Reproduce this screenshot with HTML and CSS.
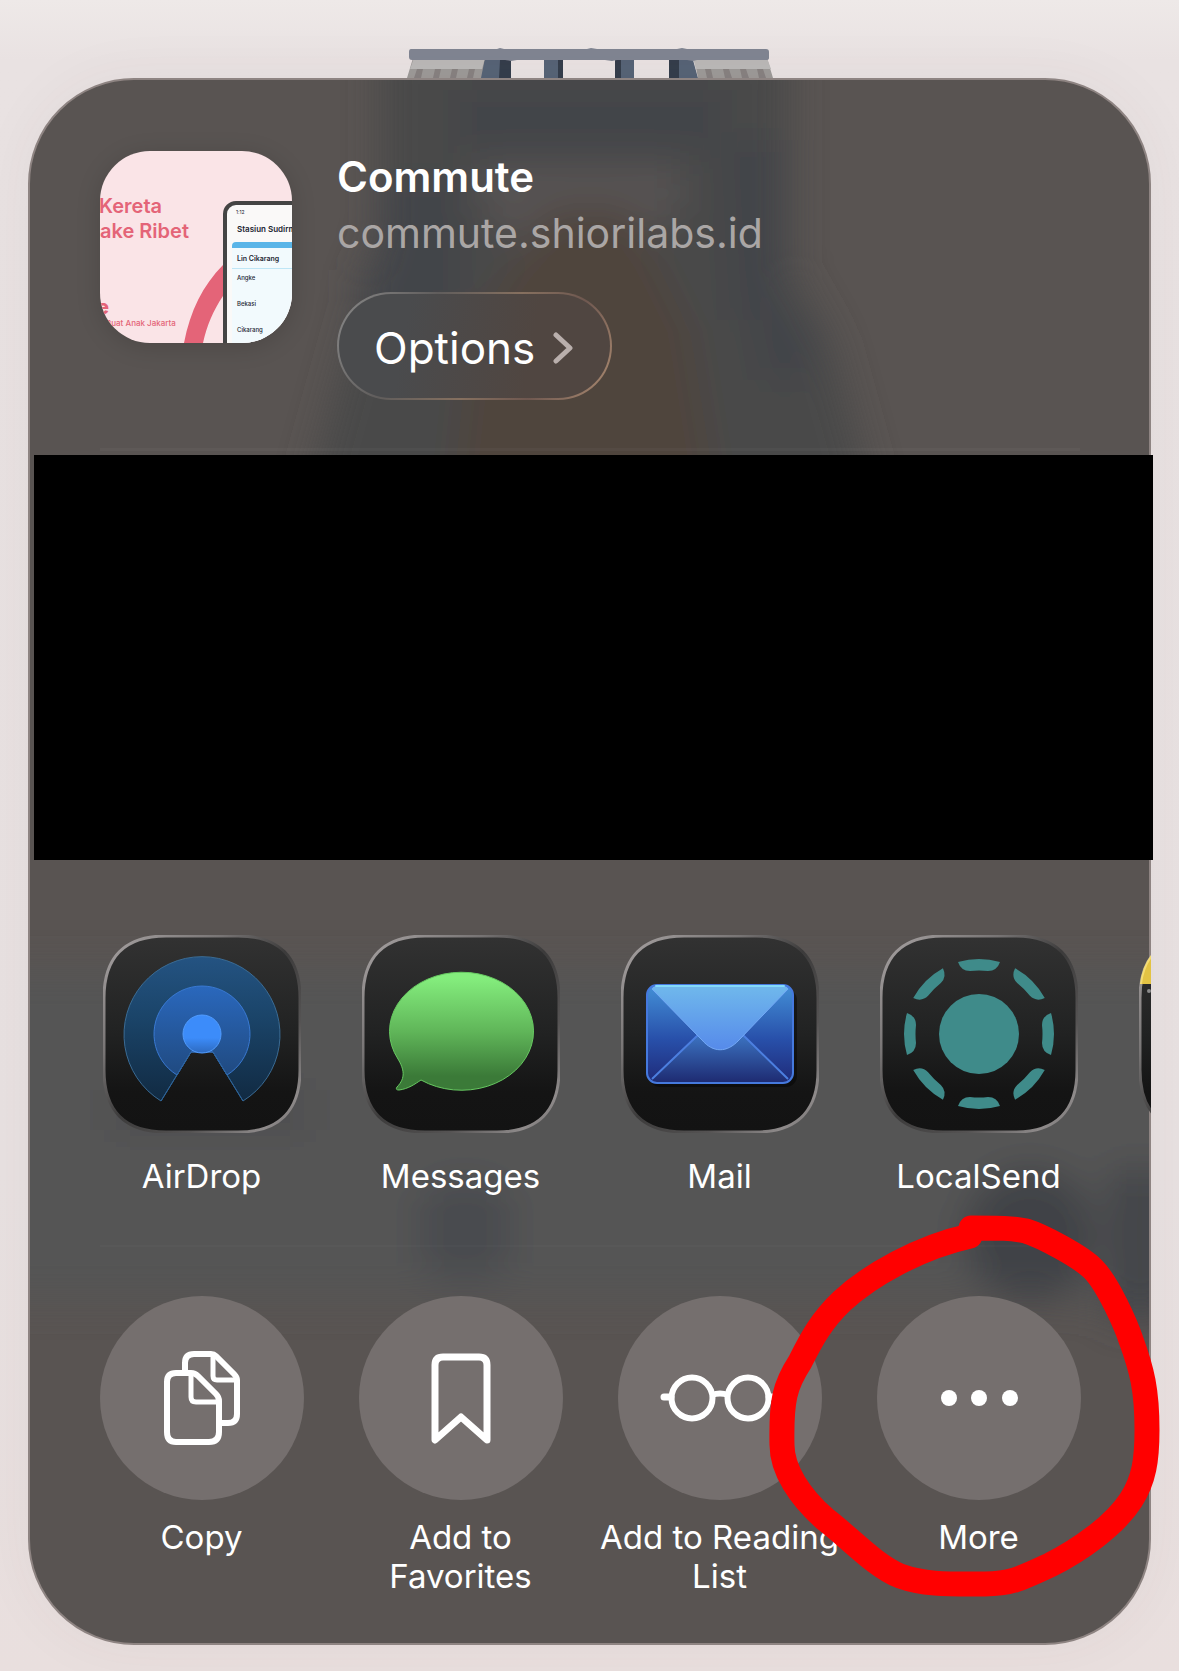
FILE: index.html
```html
<!DOCTYPE html>
<html lang="en">
<head>
<meta charset="utf-8">
<meta name="viewport" content="width=device-width, initial-scale=1">
<title>Share Commute</title>
<link rel="stylesheet" href="styles.css">
</head>
<body>
<div class="monument" aria-hidden="true">
  <svg viewBox="0 0 366 30" width="366" height="30">
    <path d="M76 12h28v18H72z M137 12h18v18h-18z M208 12h19v18h-19z M262 12h24l5 18h-29z" fill="#566376"/>
    <path d="M93 12h11v18H92z M151 12h5v18h-5z M208 12h6v18h-6z M262 12h10v18h-10z" fill="#343d4b"/>
    <path d="M6 10h72l-4 20H0z M287 10h73l6 20h-75z" fill="#9d9997"/>
    <path d="M7 10h71l-3 11H3z M286 10h74l4 11h-75z" fill="#bab8b7"/>
    <path d="M10 21h6l-2 9H7z M28 21h6l-2 9h-6z M45 21h6l-2 9h-6z M62 21h6l-2 9h-6z M298 21h6l2 9h-6z M316 21h6l3 9h-7z M333 21h6l3 9h-7z M350 21h6l3 9h-7z" fill="#878180"/>
    <path d="M4 1H90L93 0L97 1H180L184 0L190 1H270L275 0L280 1H359Q362 1 362 4V10Q362 12 359 12H290L286 13L280 12H210L205 13L198 12H110L104 13L98 12H5Q2 12 2 9V4Q2 1 4 1Z" fill="#808592"/>
  </svg>
</div>
<main class="sheet">
  <div class="glass" aria-hidden="true">
    <svg viewBox="0 0 1119 1563" preserveAspectRatio="none">
      <g filter="url(#soft)">
        <path d="M350 -40H760V190L800 260L850 440H270L320 260L350 150Z" fill="#4a4948"/>
        <path d="M430 10H690V70H430Z M350 100H430V210H350Z M690 60H750V240H700Z M330 190H420V270H330Z M720 240H780V300H730Z" fill="#434549"/>
        <path d="M450 85H650V130L600 170H500L450 130Z" fill="#575352"/>
        <path d="M520 130H600L660 250L690 440H420L440 250Z" fill="#4f443e"/>
        <rect x="-60" y="890" width="1240" height="330" fill="#555555"/>
        <rect x="80" y="1010" width="200" height="40" fill="#4d4e4f"/>
        <rect x="390" y="1100" width="90" height="100" rx="30" fill="#4a4c4f"/>
        <circle cx="1000" cy="1155" r="66" fill="#414347"/>
        <rect x="1080" y="1090" width="60" height="150" fill="#434549"/>
      </g>
      <rect x="70" y="368" width="980" height="3" fill="#ffffff" opacity=".03"/>
      <rect x="70" y="1165" width="980" height="2" fill="#ffffff" opacity=".02"/>
      <defs><filter id="soft" x="-10%" y="-10%" width="120%" height="120%"><feGaussianBlur stdDeviation="18"/></filter></defs>
    </svg>
  </div>

  <header class="preview">
    <svg class="thumb" viewBox="0 0 192 192" role="img" aria-label="Commute link preview">
      <rect width="192" height="192" fill="#fae4e7"/>
      <path d="M84 192C90 160 103 134 123 114V145C113 160 107 174 103 192Z" fill="#e46478"/>
      <g fill="#e46478">
        <text class="t-head" x="-1" y="62">Kereta</text>
        <text class="t-head" x="0" y="87">ake Ribet</text>
        <text class="t-brand" x="-3" y="163">e</text>
        <text class="t-sub" x="6" y="175">Buat Anak Jakarta</text>
      </g>
      <rect x="125" y="52" width="120" height="200" rx="11" fill="#faf9f8" stroke="#444444" stroke-width="4"/>
      <path d="M132 95Q132 91 136 91H192V192H132Z" fill="#f2fafd"/>
      <path d="M132 97V95Q132 91 136 91H192V97Z" fill="#5ab5e8"/>
      <rect x="132" y="117" width="60" height="1" fill="#bfe6f6"/>
      <g fill="#222533">
        <text class="t-tiny" x="136" y="63">1:12</text>
        <text class="t-station" x="137" y="81">Stasiun Sudirman</text>
        <text class="t-line" x="137" y="110">Lin Cikarang</text>
        <text class="t-stop" x="137" y="129">Angke</text>
        <text class="t-stop" x="137" y="155">Bekasi</text>
        <text class="t-stop" x="137" y="181">Cikarang</text>
      </g>
    </svg>
    <div class="preview-info">
      <h1 class="title">Commute</h1>
      <p class="domain">commute.shiorilabs.id</p>
      <button class="options" type="button">Options
        <svg viewBox="0 0 20 32" width="20" height="32" aria-hidden="true"><path d="M3 3L17 16L3 29" fill="none" stroke="#b9afac" stroke-width="5" stroke-linecap="round" stroke-linejoin="round"/></svg>
      </button>
    </div>
  </header>

  <div class="redacted"></div>

  <ul class="apps">
    <li><button class="target" type="button">
      <svg class="app-icon" viewBox="0 0 198 198" aria-hidden="true">
        <defs>
          <linearGradient id="tile" x2="0" y2="1"><stop offset="0" stop-color="#323232"/><stop offset=".5" stop-color="#212222"/><stop offset=".8" stop-color="#141414"/><stop offset="1" stop-color="#131313"/></linearGradient>
          <linearGradient id="rim" x2="1" y2="1"><stop offset="0" stop-color="#a9a4a4"/><stop offset=".3" stop-color="#777474"/><stop offset=".5" stop-color="#3c3b3b"/><stop offset=".72" stop-color="#555353"/><stop offset=".9" stop-color="#8f8b8b"/><stop offset="1" stop-color="#666363"/></linearGradient>
          <linearGradient id="ad1" x2="0" y2="1"><stop offset="0" stop-color="#245382"/><stop offset=".4" stop-color="#1b456a"/><stop offset="1" stop-color="#112a42"/></linearGradient>
          <linearGradient id="ad2" x2="0" y2="1"><stop offset="0" stop-color="#2a68bd"/><stop offset="1" stop-color="#204a80"/></linearGradient>
          <linearGradient id="ad3" x2="0" y2="1"><stop offset=".6" stop-color="#3c8cfa"/><stop offset="1" stop-color="#2d6ac0"/></linearGradient>
          <path id="tile-shape" d="M63 1H135C176 1 197 22 197 63V135C197 176 176 197 135 197H63C22 197 1 176 1 135V63C1 22 22 1 63 1Z" fill="url(#tile)" stroke="url(#rim)" stroke-width="3"/>
        </defs>
        <use href="#tile-shape"/>
        <path d="M58 166A78 78 0 1 1 140 166L110 117H88Z" fill="url(#ad1)" stroke="#3a6b94" stroke-width="1" stroke-linejoin="round"/>
        <path d="M74 140A48 48 0 1 1 124 140L110 117H88Z" fill="url(#ad2)" stroke="#3979d2" stroke-width="1"/>
        <path d="M88 117L58 166M110 117L140 166" stroke="#2a6199" stroke-width="1"/>
        <circle cx="99" cy="99" r="19" fill="url(#ad3)" stroke="#519cff" stroke-width="1"/>
      </svg><span class="label">AirDrop</span></button></li>
    <li><button class="target" type="button">
      <svg class="app-icon" viewBox="0 0 198 198" aria-hidden="true">
        <defs><linearGradient id="msg" x2="0" y2="1"><stop offset=".05" stop-color="#84ed7d"/><stop offset=".5" stop-color="#60b659"/><stop offset=".88" stop-color="#3b7a38"/></linearGradient></defs>
        <use href="#tile-shape"/>
        <path d="M59 145A72 59 0 1 0 36 124C42 134 44 143 35 152Q33 155 37 155C46 154 53 149 59 145Z" fill="url(#msg)" stroke="#67c961" stroke-width="1"/>
      </svg><span class="label">Messages</span></button></li>
    <li><button class="target" type="button">
      <svg class="app-icon" viewBox="0 0 198 198" aria-hidden="true">
        <defs>
          <linearGradient id="m1" x2="0" y2="1"><stop offset="0" stop-color="#4390d7"/><stop offset=".55" stop-color="#2850aa"/><stop offset="1" stop-color="#1f2a78"/></linearGradient>
          <linearGradient id="m2" x2="0" y2="1"><stop offset="0" stop-color="#70b9ec"/><stop offset="1" stop-color="#568aea"/></linearGradient>
          <linearGradient id="m3" x2="0" y2="1"><stop offset="0" stop-color="#3c74c2"/><stop offset="1" stop-color="#1e2b72"/></linearGradient>
        </defs>
        <use href="#tile-shape"/>
        <rect x="28" y="54" width="148" height="98" rx="11" fill="#000000" opacity=".4"/>
        <rect x="26" y="50" width="146" height="98" rx="10" fill="url(#m1)"/>
        <path d="M31 144L77 100H122L167 144Q165 147 161 147H37Q33 147 31 144Z" fill="url(#m3)"/>
        <path d="M31 144L77 100M122 100L167 144" stroke="#4c7fe0" stroke-width="2"/>
        <path d="M31 54Q33 50 38 50H160Q165 50 167 54L118 105C106 118 92 118 81 105Z" fill="url(#m2)" stroke="#74a9f6" stroke-width="1"/>
        <rect x="26" y="50" width="146" height="98" rx="10" fill="none" stroke="#4579de" stroke-width="2"/>
        <path d="M35 51H163" stroke="#83dafa" stroke-width="2" stroke-linecap="round"/>
      </svg><span class="label">Mail</span></button></li>
    <li><button class="target" type="button">
      <svg class="app-icon" viewBox="0 0 198 198" aria-hidden="true">
        <defs><path id="dash" d="M78 27Q99 21 120 27Q117 36 108 36Q99 35 90 36Q81 36 78 27Z"/></defs>
        <use href="#tile-shape"/>
        <g fill="#3f8b8a"><circle cx="99" cy="99" r="40"/>
          <use href="#dash"/><use href="#dash" transform="rotate(45 99 99)"/><use href="#dash" transform="rotate(90 99 99)"/><use href="#dash" transform="rotate(135 99 99)"/><use href="#dash" transform="rotate(180 99 99)"/><use href="#dash" transform="rotate(225 99 99)"/><use href="#dash" transform="rotate(270 99 99)"/><use href="#dash" transform="rotate(315 99 99)"/></g>
      </svg><span class="label">LocalSend</span></button></li>
    <li><button class="target" type="button" aria-label="Notes">
      <svg class="app-icon" viewBox="0 0 198 198" aria-hidden="true">
        <defs><clipPath id="notes-top"><rect width="198" height="49"/></clipPath></defs>
        <use href="#tile-shape"/>
        <path clip-path="url(#notes-top)" d="M63 1H135C176 1 197 22 197 63V128H1V63C1 22 22 1 63 1Z" fill="#e3c344" stroke="#f4dc72" stroke-width="2"/>
        <circle cx="10" cy="56" r="2" fill="#8b8b8b"/>
      </svg></button></li>
  </ul>

  <ul class="actions">
    <li><button class="target" type="button">
      <svg class="action-icon" viewBox="0 0 204 204" aria-hidden="true"><g fill="none" stroke="#ffffff" stroke-width="6" stroke-linejoin="round">
        <path d="M85 74V67Q85 58 94 58H111Q114 58 116 60L134 78Q137 81 137 84V118Q137 127 128 127H121"/>
        <path d="M113 59V80Q113 84 117 84H136" stroke-width="5"/>
        <path d="M76 77H91Q95 77 98 80L116 98Q119 101 119 105V136Q119 146 109 146H76Q67 146 67 136V86Q67 77 76 77Z"/>
        <path d="M91 78V101Q91 106 96 106H118" stroke-width="5"/>
      </g></svg><span class="label">Copy</span></button></li>
    <li><button class="target" type="button">
      <svg class="action-icon" viewBox="0 0 204 204" aria-hidden="true"><path d="M84 61H120Q128 61 128 69V144L102 121L76 144V69Q76 61 84 61Z" fill="none" stroke="#ffffff" stroke-width="7" stroke-linejoin="round"/></svg>
      <span class="label">Add to Favorites</span></button></li>
    <li><button class="target" type="button">
      <svg class="action-icon" viewBox="0 0 204 204" aria-hidden="true"><g fill="none" stroke="#ffffff" stroke-width="6"><circle cx="74" cy="102" r="20.5"/><circle cx="130" cy="102" r="20.5"/><path d="M94 99Q102 96 110 99"/><path d="M46 101H53M151 101H158" stroke-width="7" stroke-linecap="round"/></g></svg>
      <span class="label">Add to Reading List</span></button></li>
    <li class="marked"><button class="target" type="button">
      <svg class="action-icon" viewBox="0 0 204 204" aria-hidden="true"><g fill="#ffffff"><circle cx="72" cy="102" r="8"/><circle cx="102" cy="102" r="8"/><circle cx="133" cy="102" r="8"/></g></svg>
      <span class="label">More</span></button>
      <svg class="scribble" viewBox="760 1205 410 400" aria-hidden="true"><path d="M971 1228C1000 1228 1012 1228 1026 1231C1042 1236 1080 1256 1093 1269C1108 1284 1126 1325 1131 1340C1142 1370 1147 1390 1147 1430C1147 1460 1144 1480 1131 1500C1115 1525 1080 1550 1050 1565C1020 1579 1010 1584 985 1584C950 1584 925 1585 900 1576C875 1566 850 1538 825 1519C800 1497 782 1470 782 1445C781 1400 785 1385 800 1362C812 1338 822 1320 842 1301C870 1275 920 1247 970 1236" fill="none" stroke="#ff0000" stroke-width="25" stroke-linecap="round" stroke-linejoin="round"/></svg>
    </li>
  </ul>
</main>
</body>
</html>
```

FILE: styles.css
```css
* {
  box-sizing: border-box;
}

body {
  margin: 0;
  padding: 48px 28px 26px;
  background: linear-gradient(#eee9e8, #e9e2e2 60px, #e8e1e1 70%, #e9dfde);
  color: #ffffff;
  font-family: Inter, "Liberation Sans", sans-serif;
}

svg {
  display: block;
}

.monument {
  display: flex;
  justify-content: center;
}

.sheet {
  position: relative;
  isolation: isolate;
  padding-bottom: 47px;
  border: 2px solid #8e8482;
  border-radius: 106px;
  background: #595452;
  box-shadow: 0 0 60px rgba(80, 60, 60, 0.05);
}

.glass {
  position: absolute;
  inset: 0;
  z-index: -1;
  overflow: hidden;
  border-radius: 104px;
}

.glass svg {
  width: 100%;
  height: 100%;
}

.preview {
  display: flex;
  gap: 45px;
  padding: 71px 70px 55px;
}

.thumb {
  flex: none;
  width: 192px;
  height: 192px;
  border-radius: 50px;
  box-shadow: 0 4px 24px rgba(0, 0, 0, 0.15);
}

.t-head {
  font-size: 20px;
  font-weight: 600;
}

.t-brand {
  font-size: 20px;
  font-weight: 800;
}

.t-sub {
  font-size: 8px;
  font-weight: 500;
}

.t-station {
  font-size: 8px;
  font-weight: 600;
}

.t-line {
  font-size: 7px;
  font-weight: 600;
}

.t-stop {
  font-size: 6px;
  font-weight: 500;
}

.t-tiny {
  font-size: 5px;
  font-weight: 400;
}

.preview-info {
  display: flex;
  flex-direction: column;
  align-items: flex-start;
}

.title,
.domain {
  margin: 0;
  line-height: 56px;
}

.title {
  margin-top: -2px;
  font-size: 42px;
  font-weight: 600;
}

.domain {
  color: #aaa6a5;
  font-size: 41px;
}

.options {
  display: flex;
  align-items: center;
  gap: 18px;
  height: 108px;
  margin-top: 31px;
  padding: 4px 37px 0 35px;
  border: 2px solid transparent;
  border-radius: 54px;
  background:
    linear-gradient(100deg, #4a4b4d 25%, #504641 70%) padding-box,
    linear-gradient(120deg, #8a8a8a, #605d5c 30%, #86705f 55%, #6f5850 75%, #ae8d73) border-box;
  color: #ffffff;
  font: 400 44px/56px Inter, "Liberation Sans", sans-serif;
}

.redacted {
  height: 405px;
  margin: 0 -4px 0 4px;
  background: #000000;
}

.apps,
.actions {
  display: flex;
  margin: 0;
  padding: 0;
  list-style: none;
}

.apps {
  overflow: hidden;
  margin-right: -2px;
  padding: 75px 0 0 42px;
}

.apps li {
  flex: 0 0 calc((100% - 43px) / 4);
}

.actions {
  margin-top: 100px;
  padding: 0 41px 0 42px;
}

.actions li {
  flex: 1 1 0;
  min-width: 0;
}

.target {
  display: flex;
  flex-direction: column;
  align-items: center;
  width: 100%;
  padding: 0;
  border: 0;
  background: none;
  color: #ffffff;
  font: 400 33px/39px Inter, "Liberation Sans", sans-serif;
}

.label {
  max-width: 246px;
  text-align: center;
}

.apps .target {
  gap: 24px;
}

.actions .target {
  gap: 18px;
}

.app-icon {
  width: 198px;
  height: 198px;
}

.action-icon {
  width: 204px;
  height: 204px;
  border-radius: 50%;
  background: #756f6e;
}

.marked {
  position: relative;
}

.scribble {
  position: absolute;
  top: -91px;
  left: -89px;
  width: 410px;
  height: 400px;
  pointer-events: none;
}
```
